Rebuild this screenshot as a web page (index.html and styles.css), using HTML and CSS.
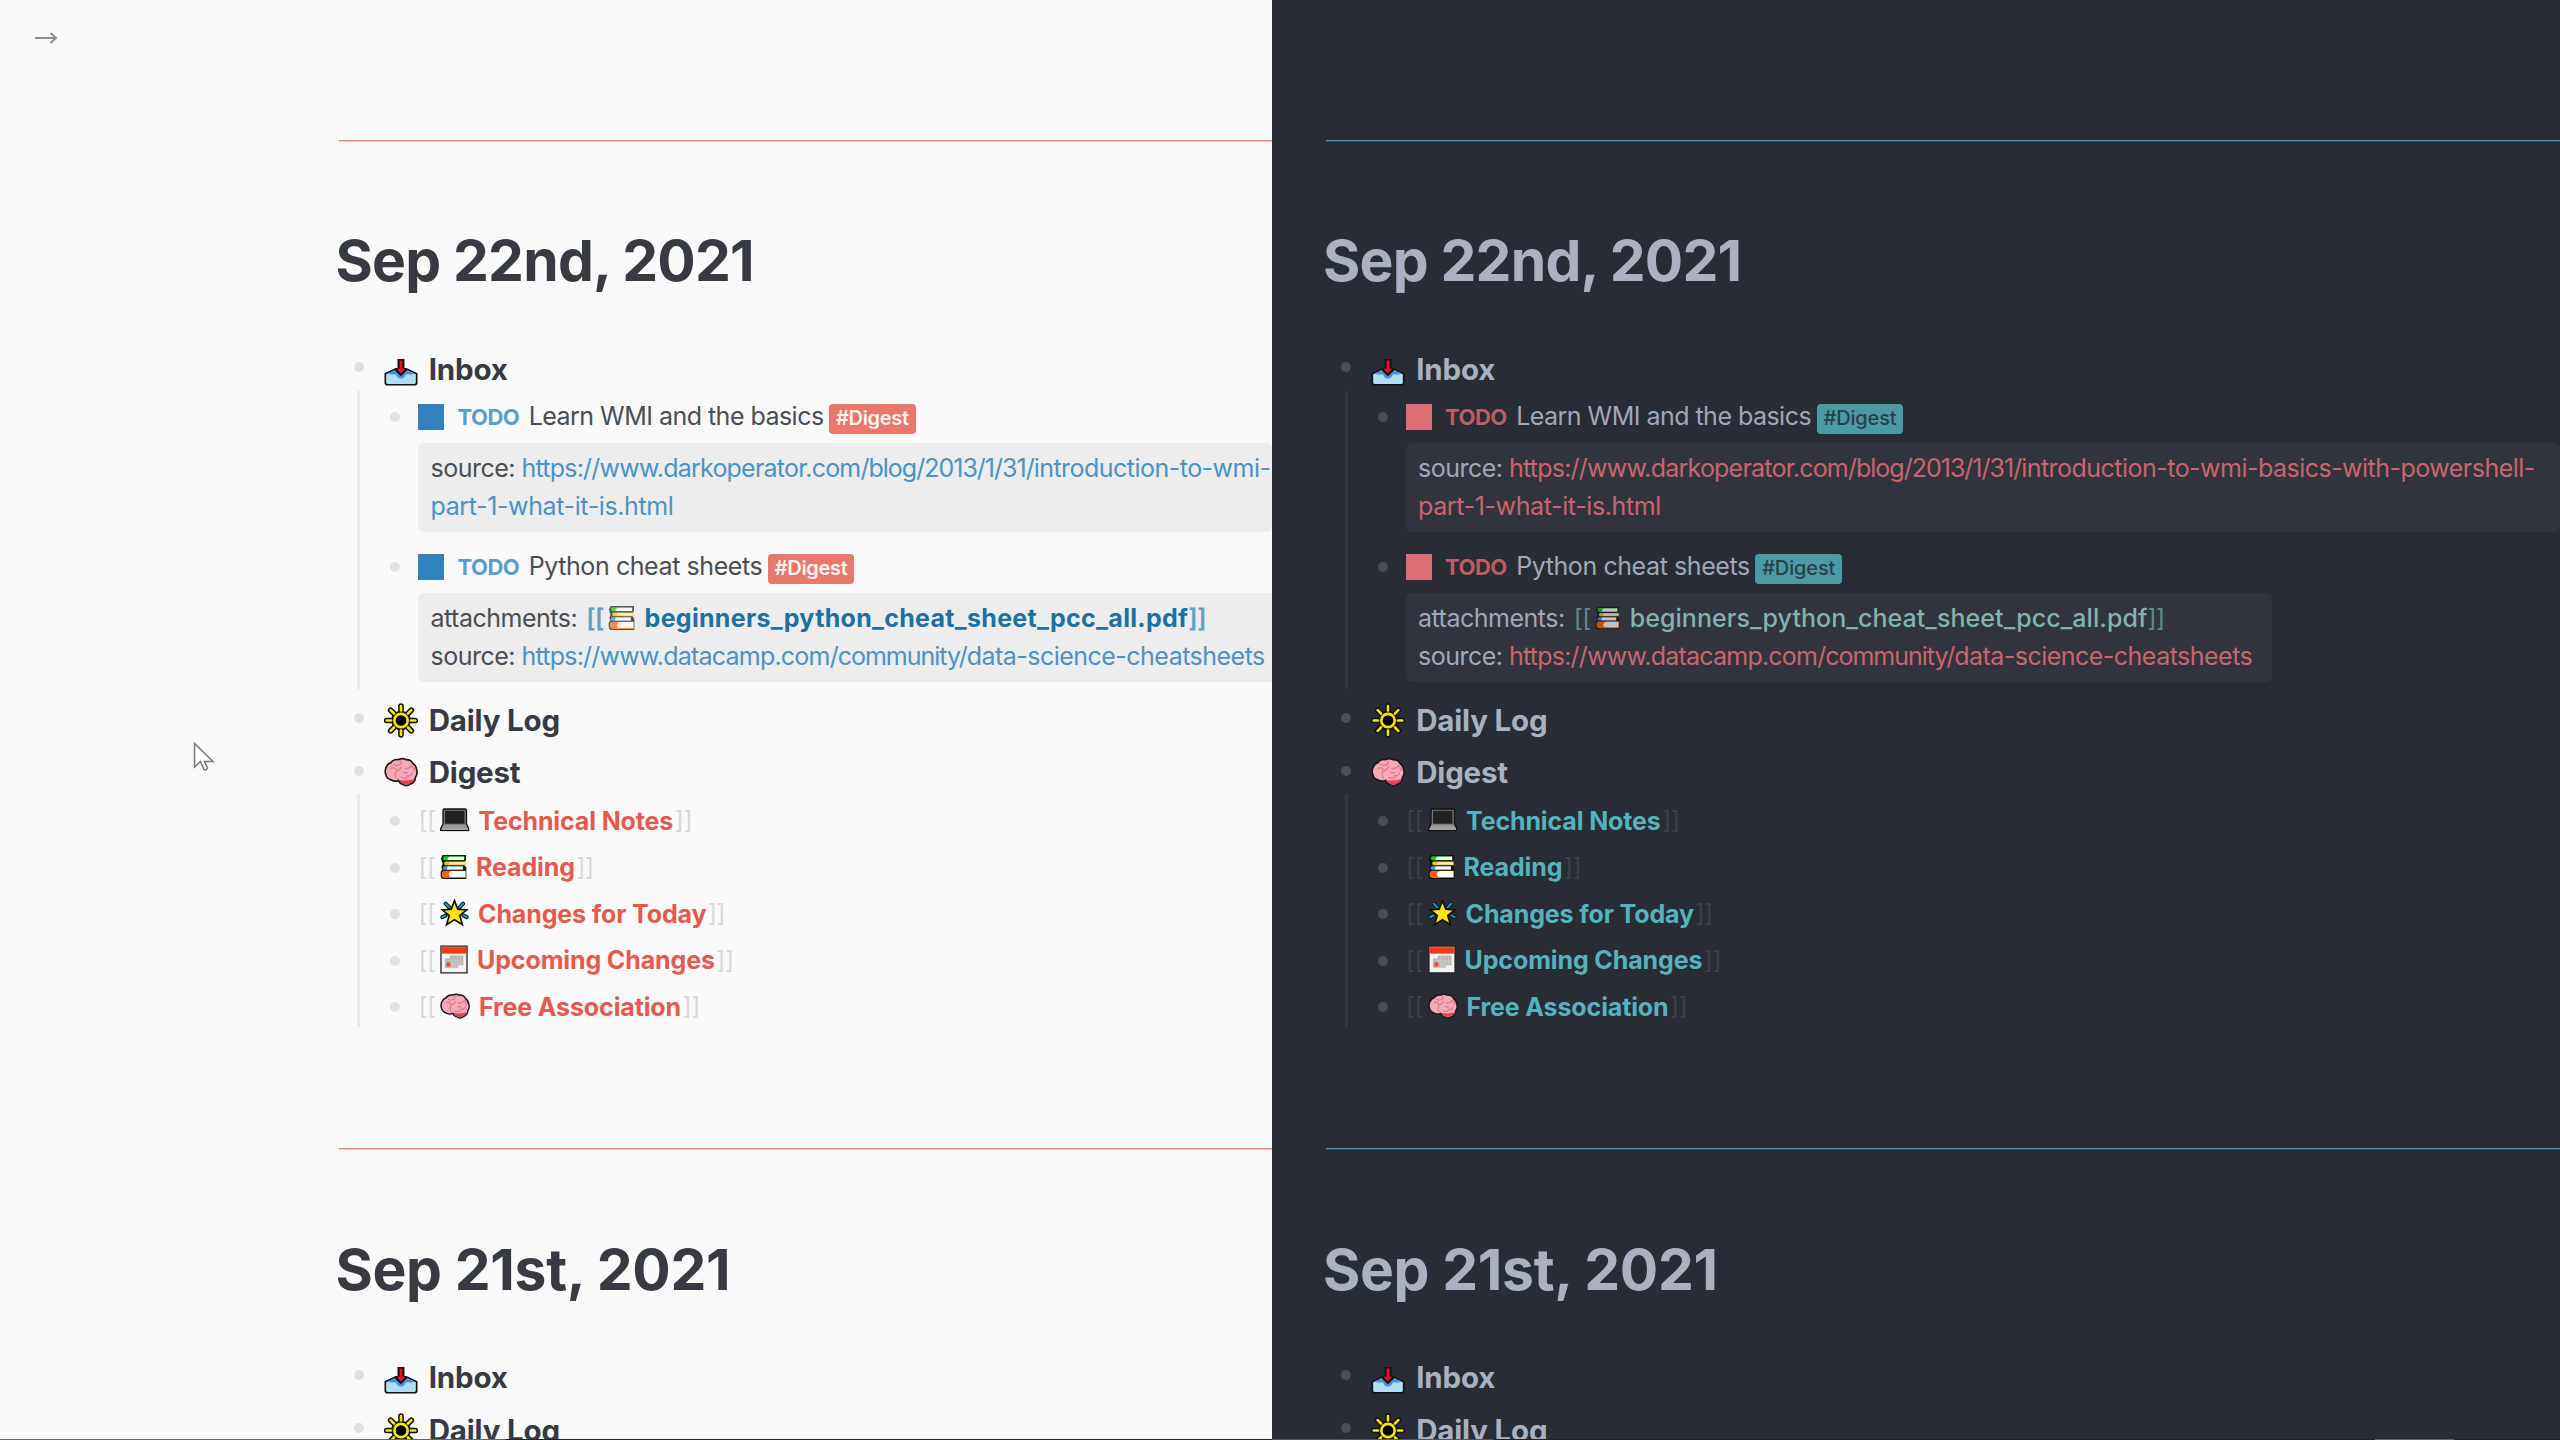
FILE: index.html
```html
<!DOCTYPE html>
<html lang="en">
<head>
<meta charset="utf-8">
<title>Journals</title>
<link rel="stylesheet" href="styles.css">
</head>
<body>
<svg class="defs" aria-hidden="true">
  <symbol id="tray" viewBox="0 0 103 83">
    <path d="M4 47 36 32H67L99 47V74Q99 80 92 80H11Q4 80 4 74Z" fill="#b1ddf5" stroke="#111" stroke-width="5" stroke-linejoin="round"/>
    <path d="M10 45 36 37H67L93 45 84 49H66Q63 61 51 61T37 49H19Z" fill="#4593dd"/>
    <path d="M41 2H62V30L72 35 51 54 31 35 41 30Z" fill="#111"/>
    <path d="M47 7H56V32H64L51 47 38 32H47Z" fill="#e6102c"/>
  </symbol>
  <symbol id="sun" viewBox="0 0 102 104">
    <g stroke-linecap="round" fill="none">
      <path d="M51 9V22M51 82V95M8 52H21M81 52H94M20 21 30 31M72 73 82 83M82 21 72 31M30 73 20 83" stroke="#111" stroke-width="17"/>
      <circle cx="51" cy="52" r="20" stroke="#111" stroke-width="19"/>
      <path d="M51 9V22M51 82V95M8 52H21M81 52H94M20 21 30 31M72 73 82 83M82 21 72 31M30 73 20 83" stroke="#f5e400" stroke-width="8"/>
      <circle cx="51" cy="52" r="20" fill="#000" stroke="#f5e400" stroke-width="8"/>
    </g>
  </symbol>
  <symbol id="brain" viewBox="0 0 103 89">
    <path d="M20 17Q28 5 44 7Q55 1 66 7Q81 6 87 18Q98 25 99 39Q103 50 95 61Q95 75 82 80Q70 90 57 82Q47 79 44 70Q34 75 22 69Q8 65 5 51Q1 38 8 28Q11 19 20 17Z" fill="#f4aab9" stroke="#1b1618" stroke-width="5"/>
    <path d="M46 68Q65 74 92 66Q91 75 80 78Q68 87 57 80Q49 77 46 68Z" fill="#ea3d53"/>
    <path d="M29 21Q40 29 51 19M51 19V12M22 33Q35 28 38 42M38 42Q49 37 53 30M38 42Q30 53 38 63M64 35Q79 34 83 25M83 25Q93 31 90 40M54 61Q68 69 71 56M71 56Q83 58 86 48M61 47H71" fill="none" stroke="#e67a8f" stroke-width="4.500" stroke-linecap="round"/>
  </symbol>
  <symbol id="laptop" viewBox="0 0 88 70">
    <path d="M12 3H75Q79 3 79 8V48L86 61V67H2V61L9 48V8Q9 3 12 3Z" fill="#777" stroke="#111" stroke-width="4" stroke-linejoin="round"/>
    <path d="M15 8H73V47H15Z" fill="#222"/>
    <path d="M11 50H77L83 62H5Z" fill="#999"/>
    <path d="M5 61H83V65H5Z" fill="#bbb"/>
  </symbol>
  <symbol id="books" viewBox="0 0 82 77">
    <path d="M8 2H79V18L75 22V35L80 40V75H12Q2 75 2 63V53L7 47 4 39 8 29 5 20 3 12Z" fill="#111"/>
    <path d="M12 6H74V18H12Q5 12 12 6Z" fill="#16c60c"/><path d="M28 7H73V17H23Q21 12 28 7Z" fill="#fff"/>
    <path d="M16 22H78V33H16Q9 27 16 22Z" fill="#ffb900"/><path d="M28 24H76V31H26Z" fill="#fff3c4"/>
    <path d="M12 36H70V47H12Q3 42 12 36Z" fill="#3a96dd"/><path d="M23 37H69V46H21Z" fill="#fff"/>
    <path d="M13 50H78V72H13Q4 70 5 60T13 50Z" fill="#f7630c"/><path d="M36 51H77V69H33Q26 67 27 60T36 51Z" fill="#fff"/>
  </symbol>
  <symbol id="star" viewBox="0 0 86 85">
    <path d="M16 14 27 25M69 14 59 25M6 55 16 50M80 55 70 50" stroke="#111" stroke-width="12" stroke-linecap="round"/>
    <path d="M16 14 27 25M69 14 59 25M6 55 16 50M80 55 70 50" stroke="#1b9bd1" stroke-width="6" stroke-linecap="round"/>
    <path d="M43 5 53 31 80 33 59 50 67 78 43 63 19 78 27 50 6 33 33 31Z" fill="#ffe500" stroke="#111" stroke-width="5"/>
  </symbol>
  <symbol id="calendar" viewBox="0 0 86 88">
    <path d="M3 3H83V85H3Z" fill="#f4f4f4" stroke="#222" stroke-width="4"/>
    <path d="M5 6H81V26H5Z" fill="#f03a17"/>
    <path d="M30 32H72V62H56V69H15V41H30Z" fill="#b4b4b4"/>
    <path d="M16 48H72M16 55H72M16 62H56M38 32V69M46 32V69M54 32V69M63 32V62M30 41V69" stroke="#ddd" stroke-width="1.500"/>
    <circle cx="26" cy="59" r="7" fill="#e8502f"/>
  </symbol>
</svg>

<div class="compare">
  <main class="pane light">
    <section class="day">
      <h1 class="title">Sep 22nd, 2021</h1>
      <div class="row head"><i class="dot"></i><svg class="em tray"><use href="#tray"/></svg><span class="hd">Inbox</span></div>
      <div class="kids">
        <div class="row todo"><i class="dot"></i><b class="box"></b><span class="mark">TODO</span><span class="txt">Learn WMI and the basics</span><span class="tag">#Digest</span></div>
        <div class="props"><div><span class="key">source:</span> <a class="url"><span class="host">https://www.darkoperator.com</span><span class="path">/blog/2013/1/31/</span>introduction-to-wmi-</a></div><div><a class="url tail">part-1-what-it-is.html</a></div></div>
        <div class="row todo"><i class="dot"></i><b class="box"></b><span class="mark">TODO</span><span class="txt wide">Python cheat sheets</span><span class="tag">#Digest</span></div>
        <div class="props fit"><div class="files"><span class="key">attachments:</span> <a class="file"><span class="sq">[[</span><svg class="em"><use href="#books"/></svg><span class="fname">beginners_python_cheat_sheet_pcc_all.pdf</span><span class="sq">]]</span></a></div><div><span class="key">source:</span> <a class="url"><span class="host">https://www.datacamp.com</span><span class="path">/community/</span>data-science-cheatsheets</a></div></div>
      </div>
      <div class="row head"><i class="dot"></i><svg class="em sun"><use href="#sun"/></svg><span class="hd">Daily Log</span></div>
      <div class="row head"><i class="dot"></i><svg class="em brain"><use href="#brain"/></svg><span class="hd">Digest</span></div>
      <div class="kids pages">
        <div class="row page"><i class="dot"></i><span class="br">[[</span><svg class="em laptop"><use href="#laptop"/></svg><a class="ref">Technical Notes</a><span class="br">]]</span></div>
        <div class="row page"><i class="dot"></i><span class="br">[[</span><svg class="em books"><use href="#books"/></svg><a class="ref">Reading</a><span class="br">]]</span></div>
        <div class="row page"><i class="dot"></i><span class="br">[[</span><svg class="em star"><use href="#star"/></svg><a class="ref">Changes for Today</a><span class="br">]]</span></div>
        <div class="row page"><i class="dot"></i><span class="br">[[</span><svg class="em calendar"><use href="#calendar"/></svg><a class="ref">Upcoming Changes</a><span class="br">]]</span></div>
        <div class="row page"><i class="dot"></i><span class="br">[[</span><svg class="em mind"><use href="#brain"/></svg><a class="ref">Free Association</a><span class="br">]]</span></div>
      </div>
    </section>
    <section class="day">
      <h1 class="title prev">Sep 21st, 2021</h1>
      <div class="row head"><i class="dot"></i><svg class="em tray"><use href="#tray"/></svg><span class="hd">Inbox</span></div>
      <div class="row head"><i class="dot"></i><svg class="em sun"><use href="#sun"/></svg><span class="hd">Daily Log</span></div>
    </section>
  </main>
  <main class="pane dark">
    <section class="day">
      <h1 class="title">Sep 22nd, 2021</h1>
      <div class="row head"><i class="dot"></i><svg class="em tray"><use href="#tray"/></svg><span class="hd">Inbox</span></div>
      <div class="kids">
        <div class="row todo"><i class="dot"></i><b class="box"></b><span class="mark">TODO</span><span class="txt">Learn WMI and the basics</span><span class="tag">#Digest</span></div>
        <div class="props"><div><span class="key">source:</span> <a class="url"><span class="host">https://www.darkoperator.com</span><span class="path">/blog/2013/1/31/</span>introduction-to-wmi-basics-with-powershell-</a></div><div><a class="url tail">part-1-what-it-is.html</a></div></div>
        <div class="row todo"><i class="dot"></i><b class="box"></b><span class="mark">TODO</span><span class="txt wide">Python cheat sheets</span><span class="tag">#Digest</span></div>
        <div class="props fit"><div class="files"><span class="key">attachments:</span> <a class="file"><span class="sq">[[</span><svg class="em"><use href="#books"/></svg><span class="fname">beginners_python_cheat_sheet_pcc_all.pdf</span><span class="sq">]]</span></a></div><div><span class="key">source:</span> <a class="url"><span class="host">https://www.datacamp.com</span><span class="path">/community/</span>data-science-cheatsheets</a></div></div>
      </div>
      <div class="row head"><i class="dot"></i><svg class="em sun"><use href="#sun"/></svg><span class="hd">Daily Log</span></div>
      <div class="row head"><i class="dot"></i><svg class="em brain"><use href="#brain"/></svg><span class="hd">Digest</span></div>
      <div class="kids pages">
        <div class="row page"><i class="dot"></i><span class="br">[[</span><svg class="em laptop"><use href="#laptop"/></svg><a class="ref">Technical Notes</a><span class="br">]]</span></div>
        <div class="row page"><i class="dot"></i><span class="br">[[</span><svg class="em books"><use href="#books"/></svg><a class="ref">Reading</a><span class="br">]]</span></div>
        <div class="row page"><i class="dot"></i><span class="br">[[</span><svg class="em star"><use href="#star"/></svg><a class="ref">Changes for Today</a><span class="br">]]</span></div>
        <div class="row page"><i class="dot"></i><span class="br">[[</span><svg class="em calendar"><use href="#calendar"/></svg><a class="ref">Upcoming Changes</a><span class="br">]]</span></div>
        <div class="row page"><i class="dot"></i><span class="br">[[</span><svg class="em mind"><use href="#brain"/></svg><a class="ref">Free Association</a><span class="br">]]</span></div>
      </div>
    </section>
    <section class="day">
      <h1 class="title prev">Sep 21st, 2021</h1>
      <div class="row head"><i class="dot"></i><svg class="em tray"><use href="#tray"/></svg><span class="hd">Inbox</span></div>
      <div class="row head"><i class="dot"></i><svg class="em sun"><use href="#sun"/></svg><span class="hd">Daily Log</span></div>
    </section>
  </main>
</div>
<svg class="toggle" viewBox="0 0 24 14"><path d="M1 7H22M16.500 2 22 7 16.500 12" fill="none" stroke="#8c8c91" stroke-width="2"/></svg>
<svg class="cursor" viewBox="0 0 22 30"><path d="M1.500 1.500V25L7.500 19.500 11 27.500Q13 29 14.500 26L11.500 19.500H20Z" fill="#fff" stroke="#77777d" stroke-width="1.500"/></svg>
<div class="edge"></div>
</body>
</html>
```
FILE: styles.css
```css
* { box-sizing: border-box; }
body {
  margin: 0;
  width: 2560px;
  height: 1440px;
  overflow: hidden;
  position: relative;
  font-family: Inter, "Liberation Sans", sans-serif;
  font-size: 25px;
  letter-spacing: -0.5px;
}
.defs { display: none; }

.compare {
  display: grid;
  grid-template-columns: 1272px 1288px;
  height: 1440px;
}
.pane {
  --indent: 338.500px;
  padding: 140px 0 0 var(--indent);
  overflow: hidden;
  background: var(--bg);
  color: var(--text);
}
.light {
  --bg: #fafafa; --text: #4b4d54; --strong: #383a42; --rule: #ec7d75; --rule-soft: #f8c9c5;
  --dot: #e0e0e0; --line: #ebebeb; --panel: #ededed; --box: #3182bd;
  --mark: #5a9fcc; --url: #4b93c4; --file: #1c70a4; --sq: #629fc5;
  --tag: #e9786c; --tag-text: #fff3f1; --ref: #e55a4d; --br: #d9d9d9;
}
.dark {
  --indent: 54px;
  --bg: #282c34; --text: #a2a8b5; --strong: #abb2bf; --rule: #459aa6; --rule-soft: #2f5660;
  --dot: #4b4e56; --line: #33373f; --panel: #31343d; --box: #e06c75;
  --mark: #be5c65; --url: #c9656e; --file: #82b3ac; --sq: #648883;
  --tag: #4c9aa6; --tag-text: #29404a; --ref: #55b3bf; --br: #3c4047;
}

.day {
  height: 1008px;
  border-top: 1px solid var(--rule);
  box-shadow: inset 0 1px var(--rule-soft);
  padding-top: 85px;
}
.day + .day { padding-top: 85.700px; }
.title {
  margin: 0 0 46px -3px;
  font-size: 57px;
  line-height: 70px;
  font-weight: 650;
  letter-spacing: -0.800px;
  color: var(--strong);
  white-space: nowrap;
}
.prev { letter-spacing: -0.350px; }
.row { display: flex; align-items: center; white-space: nowrap; }
.dot { flex: none; width: 10px; height: 10px; border-radius: 50%; background: var(--dot); }
.em { flex: none; display: block; }

.head { height: 52.600px; margin-left: 15px; font-size: 29.500px; font-weight: 650; letter-spacing: -0.180px; color: var(--strong); }
.head .dot { margin: -3px 20px 0 0; }
.head .tray { width: 34px; height: 28px; margin-top: 7px; }
.head .sun { width: 34px; height: 35px; margin-top: 1px; }
.head .brain { width: 34px; height: 30px; margin-top: 0; }
.hd { margin: 0.500px 0 0 11.200px; }

.kids {
  margin: -4px 0 4.700px 18.500px;
  padding: 6px 0 7px 30px;
  border-left: 3px solid var(--line);
}
.todo { height: 38px; }
.todo .dot { margin: 3px 18px 0 0; }
.box { width: 26px; height: 26px; background: var(--box); margin-top: 2px; }
.mark { margin: 3px 0 0 13.500px; width: 62px; font-size: 22px; font-weight: 650; color: var(--mark); }
.txt { margin-left: 9.200px; letter-spacing: -0.530px; }
.wide { margin-top: 1px; letter-spacing: -0.420px; }
.tag {
  margin: 6px 0 0 5.500px;
  height: 30px;
  padding: 0 7px;
  border-radius: 4px;
  font-size: 20px;
  line-height: 29px;
  font-weight: 600;
  letter-spacing: -0.330px;
  background: var(--tag);
  color: var(--tag-text);
}
.dark .tag { font-weight: 450; letter-spacing: -0.150px; }
.props {
  margin: 8px 0 15px 28px;
  padding: 6px 13px 6px 12.500px;
  height: 89px;
  border-radius: 6px;
  background: var(--panel);
  line-height: 38.400px;
  white-space: nowrap;
}
.fit { margin-bottom: 0; width: 866px; }
.url { color: var(--url); letter-spacing: -0.520px; }
.host { letter-spacing: -0.780px; }
.path { letter-spacing: -1px; }
.tail { letter-spacing: -0.380px; }
.files { word-spacing: 2.500px; }
.file { color: var(--file); }
.file .em { display: inline-block; width: 27px; height: 26px; margin: 0 9.800px 0 4px; vertical-align: -4px; opacity: .7; }
.fname { font-weight: 700; letter-spacing: 0.300px; }
.sq { color: var(--sq); font-weight: 600; }
.dark .fname { font-weight: 500; letter-spacing: 0.060px; }
.dark .sq { font-weight: 400; }
.dark .file .em { width: 25px; }

.pages { padding: 2.300px 0 0 30px; height: 233px; margin-bottom: 0; }
.page { height: 46.600px; }
.page .dot { margin: 2px 18.500px 0 0; }
.br { color: var(--br); }
.page .em { margin-left: 4.500px; }
.laptop { width: 29.500px; height: 23.500px; }
.page .books { width: 27px; height: 26px; }
.star { width: 29px; height: 28px; }
.calendar { width: 28px; height: 29px; }
.mind { width: 30px; height: 26px; }
.ref { margin: 1px 1.600px 0 8.800px; font-weight: 650; letter-spacing: -0.130px; color: var(--ref); }

.toggle { position: absolute; left: 34px; top: 31px; width: 24px; height: 14px; }
.cursor { position: absolute; left: 193px; top: 742px; width: 22px; height: 30px; }
.edge {
  position: absolute; left: 0; right: 0; bottom: 0; height: 1px;
  background: linear-gradient(90deg, #666 505px, #262628 505px 1272px, #575353 1272px 1493px, #222 1493px 2375px, #666 2375px 2454px, #222 2454px);
}
```
